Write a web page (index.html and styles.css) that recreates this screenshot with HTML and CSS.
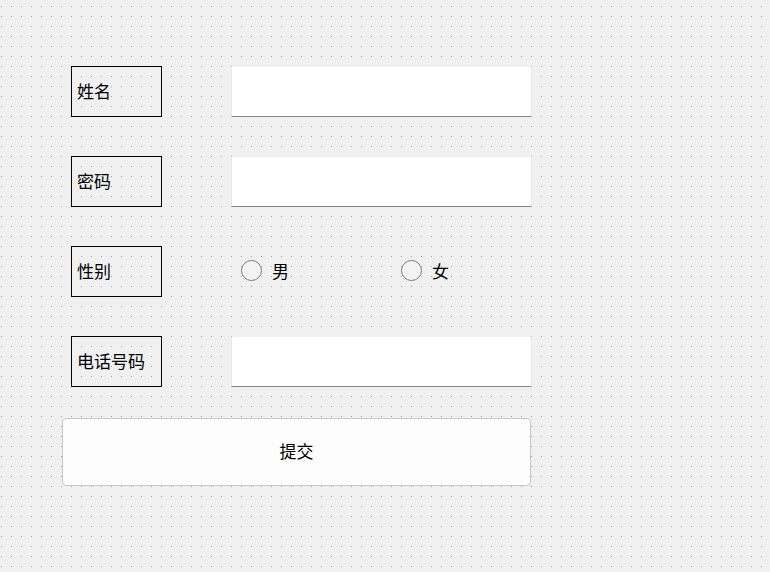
FILE: index.html
```html
<!DOCTYPE html>
<html>
<head>
  <meta charset="UTF-8">
  <link rel="stylesheet" href="styles.css">
</head>
<body>
  <form class="form">
    <div class="row">
      <label class="field-label" for="name">姓名</label>
      <input class="line-edit" type="text" id="name">
    </div>

    <div class="row">
      <label class="field-label" for="password">密码</label>
      <input class="line-edit" type="password" id="password">
    </div>

    <div class="row">
      <span class="field-label">性别</span>
      <div class="radio-group">
        <label class="radio"><input type="radio" name="gender"><span class="radio-dot"></span>男</label>
        <label class="radio"><input type="radio" name="gender"><span class="radio-dot"></span>女</label>
      </div>
    </div>

    <div class="row">
      <label class="field-label" for="phone">电话号码</label>
      <input class="line-edit" type="text" id="phone">
    </div>

    <button type="button" class="submit">提交</button>
  </form>
</body>
</html>
```

FILE: styles.css
```css
:root {
  --bg: #f0f0f0;
  --grid-dot: #a0a0a0;
  --text: #000000;
  --edit-border: #e9e9e9;
  --edit-underline: #858585;
}

html, body {
  height: 100%;
}

body {
  margin: 0;
  font-family: "Noto Sans CJK SC", "Noto Sans", sans-serif;
  font-size: 17px;
  color: var(--text);
  background-color: var(--bg);
  /* designer grid: one dot every 10px */
  background-image:
    linear-gradient(to right, transparent 1px, var(--bg) 1px),
    linear-gradient(to bottom, var(--grid-dot) 1px, transparent 1px);
  background-size: 10px 10px;
  background-position: 1px 6px;
}

.form {
  width: 469px;
  padding: 66px 0 0 62px;
  margin: 0;
}

.row {
  display: flex;
  align-items: center;
  height: 51px;
  margin: 0 0 39px 9px;
}

.row:nth-last-of-type(1) {
  margin-bottom: 31px;
}

.field-label {
  box-sizing: border-box;
  flex-shrink: 0;
  width: 91px;
  height: 51px;
  border: 1px solid #000;
  padding: 0 0 2px 5px;
  display: flex;
  align-items: center;
  line-height: 1;
  white-space: nowrap;
}

.line-edit {
  box-sizing: border-box;
  flex-shrink: 0;
  width: 301px;
  height: 51px;
  margin-left: 69px;
  padding: 0 8px;
  background: #fff;
  border: 1px solid var(--edit-border);
  border-top-color: var(--bg);
  border-bottom-color: var(--edit-underline);
  border-radius: 2px;
  font: inherit;
  outline: none;
}

.radio-group {
  display: flex;
  margin-left: 79px;
}

.radio {
  display: flex;
  align-items: center;
  gap: 10px;
  width: 160px;
  padding-bottom: 2px;
  line-height: 1;
}

.radio input {
  display: none;
}

.radio-dot {
  box-sizing: border-box;
  flex-shrink: 0;
  width: 21px;
  height: 21px;
  border: 1px solid #7a7a7a;
  border-radius: 50%;
  background: #f3f3f3;
}

.submit {
  box-sizing: border-box;
  display: flex;
  align-items: center;
  justify-content: center;
  width: 469px;
  height: 68px;
  padding: 0 0 3px;
  background: #fdfdfd;
  border: 1px solid #c8c8c8;
  border-radius: 4px;
  font: inherit;
  color: var(--text);
}
```
